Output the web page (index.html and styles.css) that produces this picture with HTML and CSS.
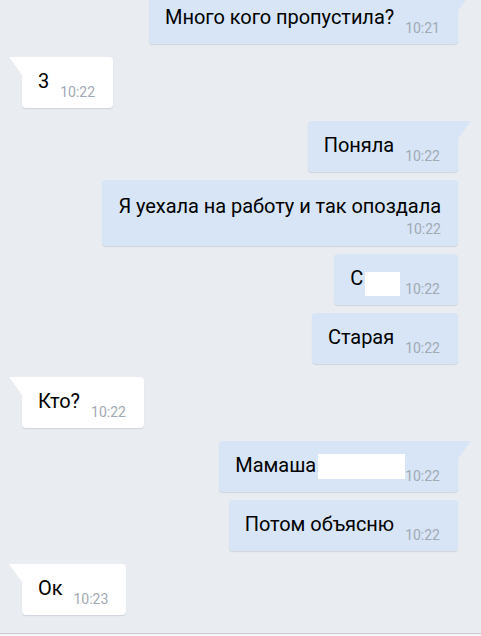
FILE: index.html
```html
<!DOCTYPE html>
<html lang="ru">
<head>
    <meta charset="UTF-8">
    <meta name="viewport" content="width=device-width, initial-scale=1.0">
    <title>Сообщения</title>
    <link rel="stylesheet" href="styles.css">
</head>
<body>
    <div class="chat">
        <div class="msg out tail">
            <span class="text">Много кого пропустила?</span>
            <span class="time">10:21</span>
        </div>
        <div class="msg in tail group">
            <span class="text">3</span>
            <span class="time">10:22</span>
        </div>
        <div class="msg out tail group">
            <span class="text">Поняла</span>
            <span class="time">10:22</span>
        </div>
        <div class="msg out wrap">
            <span class="text">Я уехала на работу и так опоздала</span>
            <span class="time">10:22</span>
        </div>
        <div class="msg out">
            <span class="text">С<span class="hidden hidden-short"></span></span>
            <span class="time">10:22</span>
        </div>
        <div class="msg out">
            <span class="text">Старая</span>
            <span class="time">10:22</span>
        </div>
        <div class="msg in tail group">
            <span class="text">Кто?</span>
            <span class="time">10:22</span>
        </div>
        <div class="msg out tail group">
            <span class="text">Мамаша<span class="hidden hidden-long"></span></span>
            <span class="time">10:22</span>
        </div>
        <div class="msg out">
            <span class="text">Потом объясню</span>
            <span class="time">10:22</span>
        </div>
        <div class="msg in tail group">
            <span class="text">Ок</span>
            <span class="time">10:23</span>
        </div>
    </div>
    <div class="footer"></div>
</body>
</html>
```

FILE: styles.css
```css
body {
    margin: 0;
    height: 636px;
    overflow: hidden;
    background-color: #e9edf1;
    font-family: Roboto, "Noto Sans", sans-serif;
    color: #000;
}

.chat {
    height: 640px;
    margin-top: -7px;
    display: flex;
    flex-direction: column;
    align-items: flex-start;
}

.msg {
    position: relative;
    display: flex;
    align-items: flex-start;
    padding: 12px 18px 7px 16px;
    margin-top: 8px;
    border-radius: 4px;
    box-shadow: 0 1px 1px rgba(60, 80, 110, 0.16);
}

.msg:first-child {
    margin-top: 0;
}

.msg.group {
    margin-top: 13px;
}

.msg.in {
    margin-left: 22px;
    background-color: #fff;
}

.msg.out {
    align-self: flex-end;
    margin-right: 23px;
    background-color: #d7e5f6;
}

.msg .text {
    font-size: 20px;
    line-height: 25px;
    letter-spacing: -0.05px;
    white-space: nowrap;
}

.msg .time {
    margin-top: 15px;
    margin-left: 11px;
    font-size: 14px;
    line-height: 17px;
    color: #a1a9b3;
}

/* long message: time goes under the text */
.msg.wrap {
    flex-direction: column;
    padding: 14px 17px 8px 16px;
}

.msg.wrap .time {
    align-self: flex-end;
    margin-top: 2px;
}

/* bubble tails */
.msg.in.tail {
    border-top-left-radius: 0;
}

.msg.out.tail {
    border-top-right-radius: 0;
}

.msg.tail::before {
    content: "";
    position: absolute;
    top: 0;
    width: 13px;
    height: 18px;
    background-color: inherit;
}

.msg.in.tail::before {
    left: -13px;
    clip-path: polygon(0 0, 100% 0, 100% 100%);
}

.msg.out.tail::before {
    right: -13px;
    clip-path: polygon(0 0, 100% 0, 0 100%);
}

/* white boxes hiding part of the text */
.hidden {
    display: inline-block;
    background-color: #fff;
}

.hidden-short {
    width: 35px;
    height: 24px;
    margin-left: 2px;
    margin-right: -6px;
    margin-bottom: -11px;
}

.hidden-long {
    width: 87px;
    height: 25px;
    margin-left: 2px;
    margin-right: -11px;
    margin-bottom: -7px;
}

.footer {
    position: fixed;
    left: 0;
    right: 0;
    bottom: 0;
    height: 2px;
    border-top: 1px solid #c7cbd0;
    background-color: #f3f4f6;
}
```
